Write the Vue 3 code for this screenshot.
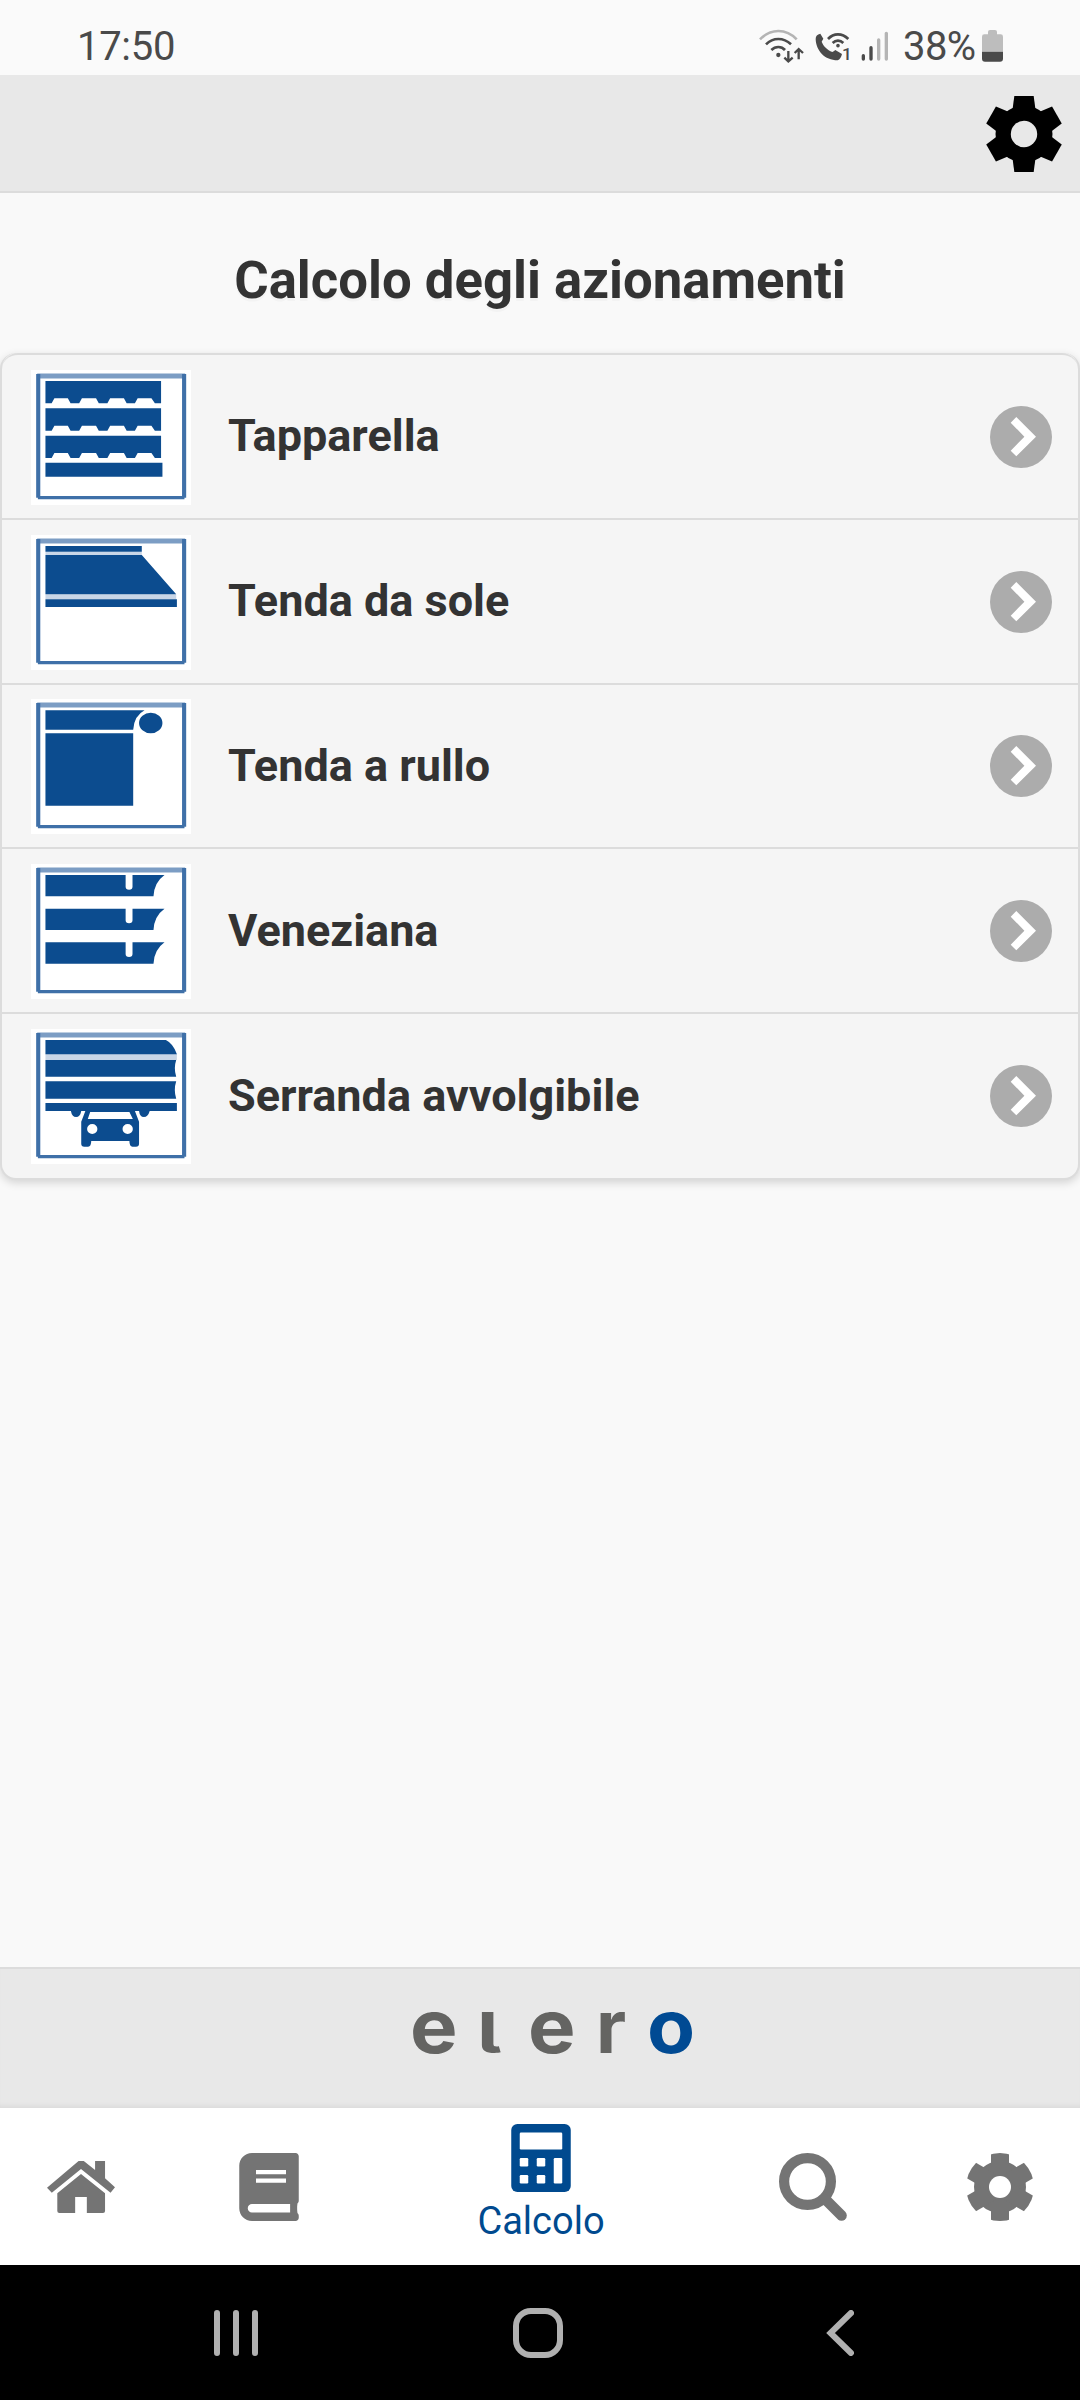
<template>
  <div class="screen">
    <header class="status-bar">
      <span class="clock">17:50</span>
      <div class="status-icons">
        <svg class="wifi" viewBox="55 85 140 105" fill="none" stroke="#4a4a4a" stroke-width="8">
          <path d="M58 119Q82 94 113 94T168 119" stroke="#b4b4b4" />
          <path d="M76 134Q92 118 113 118T151 134" />
          <path d="M92 151Q101 142 113 142T133 151" />
          <circle cx="113" cy="166" r="6.5" fill="#4a4a4a" stroke="none" />
          <path d="M143 154V184M131 174L143 185L156 174M174 179V149M162 160L174 148L187 160" stroke-width="7" />
        </svg>
        <svg class="call" viewBox="222 85 112 105" fill="none" stroke="#4a4a4a" stroke-width="8">
          <path
            d="M227 118Q227 105 241 102L250 117L245 126C250 139 262 151 277 157Q281 156 286 151L306 163Q303 178 293 182C254 182 228 153 227 118Z"
            fill="#4a4a4a" stroke="none" />
          <path d="M264 118Q277 104 294 104T325 118M278 130Q285 123 294 123T310 130" />
          <circle cx="294" cy="138" r="5.5" fill="#4a4a4a" stroke="none" />
          <text x="306" y="182" class="sim">1</text>
        </svg>
        <svg class="signal" viewBox="362 85 84 105" stroke-width="10" stroke-linecap="round">
          <path d="M369 168V178M392 144V178" stroke="#4a4a4a" />
          <path d="M415 121V178M438 101V178" stroke="#b4b4b4" />
        </svg>
        <span class="percent">38%</span>
        <svg class="battery" viewBox="726 91 63 95">
          <path d="M726 156V111Q726 104 733 104H744V97Q744 91 750 91H765Q771 91 771 97V104H782Q789 104 789 111V156Z"
            fill="#bdbdbd" />
          <path d="M726 156H789V177Q789 186 780 186H735Q726 186 726 177Z" fill="#4a4a4a" />
        </svg>
      </div>
    </header>

    <div class="toolbar">
      <svg class="toolbar-cog" viewBox="-38 -38 76 76">
        <mask id="cog-hole">
          <rect x="-38" y="-38" width="76" height="76" fill="#fff" />
          <circle r="13.2" fill="#000" />
        </mask>
        <g mask="url(#cog-hole)">
          <circle r="28.5" />
          <path v-for="a in [0, 60, 120]" :key="a" :transform="`rotate(${a})`"
            d="M-9.7 -38H9.7L11.5 -24V24L9.7 38H-9.7L-11.5 24V-24Z" />
        </g>
      </svg>
    </div>

    <main class="content">
      <h1>Calcolo degli azionamenti</h1>
      <ul class="list">
        <li v-for="item in items" :key="item.label" class="list-item">
          <svg class="thumb" viewBox="0 0 465 405" preserveAspectRatio="none">
            <rect width="465" height="405" fill="#fff" />
            <path d="M18 18H448" class="frame frame-top" />
            <path d="M21 12V383M445 12V383" class="frame" />
            <path d="M20 383H446" class="frame frame-bottom" />
            <path v-if="item.light" :d="item.light" fill="#c9d6e7" />
            <path :d="item.shape" fill="#0c4c8f" fill-rule="evenodd" />
          </svg>
          <span class="label">{{ item.label }}</span>
          <svg class="chevron" viewBox="0 0 62 62">
            <circle cx="31" cy="31" r="31" fill="#acacac" />
            <path d="M26.3 11L46 30.7L26.3 50.2L20.7 44.7L34.4 30.7L20.7 16.7Z" fill="#fff" />
          </svg>
        </li>
      </ul>
    </main>

    <div class="brand">
      <svg class="logo" viewBox="0 0 281 42">
        <g fill="#646462">
          <text transform="translate(-3 41.5) scale(1.08 1)">e</text>
          <text transform="translate(64 42) scale(1.4 1)" class="ell">l</text>
          <text transform="translate(115 41.5) scale(1.08 1)">e</text>
          <text transform="translate(183 41.5)">r</text>
        </g>
        <text transform="translate(234 41.5) scale(1.06 1)" fill="#004a93">o</text>
      </svg>
    </div>

    <nav class="tabs">
      <a class="tab">
        <svg class="home" viewBox="0 0 198 156" preserveAspectRatio="none">
          <path d="M92 0H107L140 27V0H169V52L198 79L185 95L99 24L14 95L0 80Z" />
          <path d="M99 39L169 97V150Q169 156 163 156H116V108H82V156H36Q30 156 30 150V97Z" />
        </svg>
      </a>
      <a class="tab">
        <svg class="book" viewBox="0 0 448 512">
          <path
            d="M448 360V24c0-13.300-10.700-24-24-24H96C43 0 0 43 0 96v320c0 53 43 96 96 96h328c13.300 0 24-10.700 24-24v-16c0-7.500-3.500-14.300-8.900-18.700-4.200-15.400-4.200-59.300 0-74.700 5.400-4.300 8.900-11.100 8.900-18.600zM126 128V160H352V128ZM126 192V224H352V192ZM383 448H96c-17.700 0-32-14.300-32-32 0-17.600 14.400-32 32-32H383Z"
            fill-rule="evenodd" />
        </svg>
      </a>
      <a class="tab active">
        <svg class="calc" viewBox="0 0 448 512">
          <rect width="448" height="512" rx="46" />
          <g fill="#fff">
            <rect x="64" y="64" width="320" height="128" rx="9" />
            <rect x="64" y="256" width="64" height="64" rx="9" />
            <rect x="192" y="256" width="64" height="64" rx="9" />
            <rect x="64" y="384" width="64" height="64" rx="9" />
            <rect x="192" y="384" width="64" height="64" rx="9" />
            <rect x="320" y="256" width="64" height="192" rx="9" />
          </g>
        </svg>
        <span>Calcolo</span>
      </a>
      <a class="tab">
        <svg class="search" viewBox="0 0 68 68" fill="none" stroke="#747474">
          <circle cx="28.500" cy="28.500" r="23.400" stroke-width="10.200" />
          <path d="M47 47L62.500 62.500" stroke-width="10.600" stroke-linecap="round" />
        </svg>
      </a>
      <a class="tab">
        <svg class="cog" viewBox="-34 -34 68 68">
          <clipPath id="cog-edge"><circle r="34" /></clipPath>
          <g clip-path="url(#cog-edge)">
            <circle r="26" />
            <rect v-for="a in [0, 60, 120]" :key="a" :transform="`rotate(${a})`" x="-9" y="-36" width="18"
              height="72" />
          </g>
          <circle r="11" fill="#fff" />
        </svg>
      </a>
    </nav>

    <footer class="system-nav">
      <svg class="recents" viewBox="0 0 44 46">
        <path d="M3 3V43M22 3V43M41 3V43" />
      </svg>
      <svg class="home-key" viewBox="0 0 50 50">
        <rect x="3" y="3" width="44" height="44" rx="15" />
      </svg>
      <svg class="back" viewBox="0 0 28 46">
        <path d="M25 3L4.500 23L25 43" />
      </svg>
    </footer>
  </div>
</template>

<script setup>
// one slat of the roller shutter with its scalloped lower edge
const slat = (y) =>
  `M42 ${y}H378V${y + 67}H360L350 ${y + 52}H310L302 ${y + 67}H278L270 ${y + 52}H230L222 ${y + 67}H197` +
  `L189 ${y + 52}H148L140 ${y + 67}H115L107 ${y + 52}H68L60 ${y + 67}H42Z`;

// venetian blade: cord slot and curved right end
const blade = (y) =>
  `M42 ${y}H275V${y + 35}Q275 ${y + 44} 285 ${y + 44}T295 ${y + 35}V${y}H388Q358 ${y + 22} 356 ${y + 64}H42Z`;

const items = [
  {
    label: 'Tapparella',
    shape: [33, 115, 197].map(slat).join('') + 'M42 278H382V320H42Z',
  },
  {
    label: 'Tenda da sole',
    light: 'M42 50H322V60H42ZM42 178H422V193H42Z',
    shape: 'M42 33H322V50H42ZM42 60H322L422 178H42ZM42 193H424V216H42Z',
  },
  {
    label: 'Tenda a rullo',
    shape: 'M42 34H330Q300 50 297 92H42ZM42 103H297V320H42ZM314 72A34 31 0 1 1 382 72A34 31 0 1 1 314 72Z',
  },
  {
    label: 'Veneziana',
    shape: [33, 134, 235].map(blade).join(''),
  },
  {
    label: 'Serranda avvolgibile',
    light: 'M42 75H424V93H42Z',
    shape:
      'M42 33H392Q414 44 424 76H42ZM42 93H422Q414 118 422 143H42ZM42 157H422Q414 183 422 209H42ZM42 222H424V246' +
      'H345Q340 264 328 264T314 246H302L314 278V344Q314 353 305 353H295Q286 353 286 336H175Q175 353 166 353H155' +
      'Q146 353 146 344V278L158 246H146Q143 264 131 264T116 246H42ZM172 249H286L296 270H165Z' +
      'M163 300A15 15 0 1 0 193 300A15 15 0 1 0 163 300ZM266 300A15 15 0 1 0 296 300A15 15 0 1 0 266 300Z',
  },
];
</script>

<style>
body {
  margin: 0;
  background: #f9f9f9;
}
</style>

<style scoped>
.screen {
  display: flex;
  flex-direction: column;
  width: 1080px;
  height: 2400px;
  overflow: hidden;
  background: #f9f9f9;
  font-family: Roboto, sans-serif;
  color: #333;
}

svg {
  display: block;
  flex: none;
}

.status-bar {
  display: flex;
  justify-content: space-between;
  box-sizing: border-box;
  height: 75px;
  padding: 23px 77px 0 77px;
  background: #fafafa;
  color: #4a4a4a;
  font-size: 40px;
  line-height: 47px;
}

.clock {
  letter-spacing: -0.3px;
}

.status-icons {
  display: flex;
}

.wifi {
  width: 46.7px;
  height: 35px;
  margin: 5px 9px 0 0;
}

.call {
  width: 37.3px;
  height: 35px;
  margin: 5px 9.3px 0 0;
}

.sim {
  fill: #4a4a4a;
  stroke: none;
  font-size: 52px;
  font-weight: 500;
}

.signal {
  width: 28px;
  height: 35px;
  margin: 5px 14px 0 0;
}

.percent {
  width: 79px;
  white-space: nowrap;
  letter-spacing: -0.6px;
}

.battery {
  width: 21px;
  height: 31.7px;
  margin-top: 7px;
}

.toolbar {
  display: flex;
  justify-content: flex-end;
  align-items: center;
  box-sizing: border-box;
  height: 118px;
  padding: 2px 18px 0 0;
  background: #e8e8e8;
  border-bottom: 2px solid #dcdcdc;
}

.toolbar-cog {
  width: 76px;
  height: 76px;
}

.content {
  height: 1774px;
}

h1 {
  margin: 0;
  height: 160px;
  font-size: 52.7px;
  font-weight: 700;
  line-height: 175px;
  text-align: center;
  text-shadow: 0 3px 0 #f3f3f3;
}

.list {
  display: grid;
  grid-template-rows: 165px 165px 164px 165px 166px;
  box-sizing: border-box;
  margin: 0;
  padding: 0;
  list-style: none;
  background: #f5f5f5;
  border: 2px solid #dcdcdc;
  border-top: 0;
  border-radius: 16px;
  box-shadow: 0 3px 9px rgba(0, 0, 0, 0.15);
}

.list-item {
  display: flex;
  align-items: flex-start;
  padding: 15px 26px 0 29px;
  border-top: 2px solid #dcdcdc;
}

.list-item:first-child {
  border-radius: 16px 16px 0 0;
}

.list-item:nth-child(3) {
  padding-top: 14px;
}

.thumb {
  width: 160px;
  height: 135px;
}

.frame {
  fill: none;
  stroke: #3f70a8;
  stroke-width: 12;
}

.frame-bottom {
  stroke-width: 10;
}

.frame-top {
  stroke: #7c9dc4;
  stroke-width: 15;
}

.label {
  flex: 1;
  padding-left: 37px;
  font-size: 45px;
  font-weight: 700;
  line-height: 131px;
}

.list-item:nth-child(n + 3) .label {
  line-height: 133px;
}

.chevron {
  width: 62px;
  height: 62px;
  margin-top: 36px;
}

.brand {
  display: flex;
  justify-content: center;
  box-sizing: border-box;
  height: 141px;
  padding: 42px 0 0 27px;
  background: #e8e8e8;
  border-top: 2px solid #dcdcdc;
  box-shadow: inset 0 -5px 5px -3px rgba(0, 0, 0, 0.06);
}

.logo {
  width: 281px;
  height: 42px;
  overflow: visible;
  font-family: Inter, sans-serif;
  font-size: 74px;
  font-weight: 700;
}

/* tailed l, as tall as the round letters */
.ell {
  font-size: 56px;
  font-weight: 700;
  font-feature-settings: 'cv05' 1;
}

.tabs {
  display: grid;
  grid-template-columns: 162px 214px 330px 214px 160px;
  height: 157px;
  background: #fff;
  fill: #747474;
}

.tab {
  display: flex;
  flex-direction: column;
  align-items: center;
  justify-content: center;
}

.tab.active {
  justify-content: flex-start;
  padding-top: 16px;
  color: #004a8f;
  fill: #004a8f;
  font-size: 38px;
  line-height: 44px;
}

.active span {
  margin-top: 7px;
}

.home {
  width: 68px;
  height: 52px;
}

.book,
.calc {
  width: 60px;
  height: 68px;
}

.search,
.cog {
  width: 68px;
  height: 68px;
}

.system-nav {
  display: flex;
  justify-content: space-between;
  align-items: center;
  box-sizing: border-box;
  height: 135px;
  padding: 0 226px 0 214px;
  background: #000;
  fill: none;
  stroke: #b0b0b0;
  stroke-width: 6;
  stroke-linecap: round;
}

.recents {
  width: 44px;
  height: 46px;
}

.home-key {
  width: 50px;
  height: 50px;
  margin-right: 8px;
}

.back {
  width: 28px;
  height: 46px;
}
</style>
